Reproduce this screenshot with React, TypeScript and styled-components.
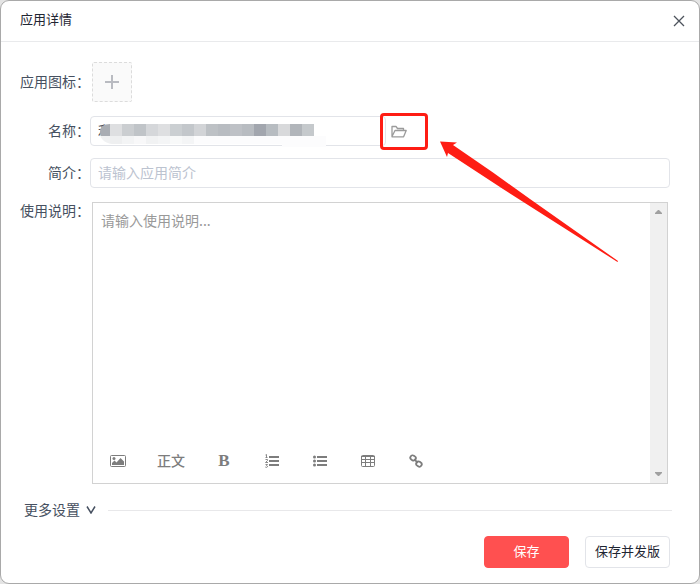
import React from "react";
import styled, { createGlobalStyle } from "styled-components";

const GlobalStyle = createGlobalStyle`
  *, *::before, *::after { box-sizing: border-box; }
  body {
    margin: 0;
    background: #e4e4e4;
    font-family: "Noto Sans CJK SC", sans-serif;
    font-size: 14px;
    line-height: 20px;
    color: #465060;
  }
  button, input, textarea { font: inherit; color: inherit; margin: 0; }
  button { cursor: pointer; }
`;

const Dialog = styled.section`
  display: flex;
  flex-direction: column;
  min-height: 100vh;
  background: #fff;
  border: 1px solid #a9a9a9;
  border-radius: 9px;
`;

const Header = styled.header`
  display: flex;
  align-items: center;
  justify-content: space-between;
  height: 41px;
  padding: 0 12px 0 19px;
  border-bottom: 1px solid #e9eaec;
`;

const Title = styled.h1`
  margin: 0;
  padding-bottom: 4px;
  font-size: 13px;
  font-weight: 400;
  color: #1f2633;
`;

const IconButton = styled.button`
  display: flex;
  align-items: center;
  justify-content: center;
  padding: 0;
  border: 0;
  background: none;
  color: #4d535c;
`;

const Form = styled.form`
  display: flex;
  flex: 1;
  flex-direction: column;
  padding: 20px 29px 15px 19px;
`;

const Row = styled.div<{ $gap?: number; $grow?: boolean }>`
  display: grid;
  grid-template-columns: 70px minmax(0, 1fr);
  align-items: ${(p) => (p.$grow ? "stretch" : "center")};
  flex: ${(p) => (p.$grow ? "1 0 auto" : "none")};
  margin-bottom: ${(p) => p.$gap ?? 12}px;
`;

const Label = styled.label`
  padding-bottom: 2px;
  line-height: 16px;
  text-align: right;
  white-space: nowrap;
`;

const Upload = styled.button`
  display: flex;
  align-items: center;
  justify-content: center;
  width: 40px;
  height: 40px;
  margin-left: 2px;
  padding: 0;
  border: 1px dashed #dcdcdc;
  border-radius: 2px;
  background: #fafafa;
  color: #b9bbc1;
`;

const TextInput = styled.input`
  width: 100%;
  height: 30px;
  padding: 0 7px 2px;
  border: 1px solid #e2e4e9;
  border-radius: 4px;
  outline: none;
  background: #fff;
  &::placeholder { color: #bcc3d0; opacity: 1; }
`;

const NameField = styled.div`
  display: flex;
  align-items: center;
  position: relative;
`;

const NameInput = styled(TextInput)`
  width: 296px;
`;

const BrowseButton = styled(IconButton)`
  width: 26px;
  height: 30px;
  color: #9b9b9b;
`;

const Mosaic = styled.svg`
  position: absolute;
  left: 8px;
  top: 4px;
  pointer-events: none;
`;

const Highlight = styled.div`
  position: absolute;
  left: 290px;
  top: -3px;
  width: 48px;
  height: 37px;
  border: 3px solid #fe1d14;
  border-radius: 4px;
  pointer-events: none;
`;

const Arrow = styled.svg`
  position: absolute;
  left: 348px;
  top: 24px;
  z-index: 1;
  pointer-events: none;
`;

const Editor = styled.div`
  display: flex;
  min-height: 282px;
  margin: 0 2px;
  border: 1px solid #d2d2d2;
`;

const EditorMain = styled.div`
  display: flex;
  flex: 1;
  flex-direction: column;
  min-width: 0;
`;

const EditorText = styled.textarea`
  flex: 1;
  width: 100%;
  padding: 7px 8px;
  border: 0;
  outline: none;
  resize: none;
  overflow: hidden;
  background: none;
  &::placeholder { color: #999; opacity: 1; }
`;

const Toolbar = styled.div`
  display: flex;
  align-items: center;
  height: 44px;
  padding-left: 1px;
`;

const Tool = styled(IconButton)<{ $wide?: boolean }>`
  width: ${(p) => (p.$wide ? 58 : 48)}px;
  height: 30px;
  padding-bottom: ${(p) => (p.$wide ? 2 : 0)}px;
  color: #7d7d7d;
  font-weight: 500;
`;

const BoldGlyph = styled.b`
  font-family: "Liberation Serif", serif;
  font-size: 17px;
`;

const ScrollTrack = styled.div`
  display: flex;
  flex-direction: column;
  justify-content: space-between;
  width: 17px;
  background: #f0f0f0;
`;

const ScrollButton = styled(IconButton)`
  height: 18px;
  color: #a0a0a0;
`;

const More = styled.div`
  display: flex;
  align-items: center;
  gap: 12px;
  padding-left: 4px;
  margin-bottom: 16px;
  &::after {
    content: "";
    flex: 1;
    height: 1px;
    margin-right: -2px;
    background: #e8e8ea;
  }
`;

const MoreButton = styled(IconButton)`
  gap: 6px;
  height: 20px;
  color: #465060;
`;

const MoreText = styled.span`
  padding-bottom: 2px;
`;

const Footer = styled.footer`
  display: flex;
  justify-content: flex-end;
  gap: 16px;
`;

const ActionButton = styled.button<{ $primary?: boolean }>`
  width: 85px;
  height: 32px;
  padding: 0 0 2px;
  border: 1px solid ${(p) => (p.$primary ? "#ff5050" : "#e2e4e9")};
  border-radius: 4px;
  background: ${(p) => (p.$primary ? "#ff5050" : "#fff")};
  color: ${(p) => (p.$primary ? "#fff" : "#1f2633")};
  font-size: 13px;
`;

const CELLS = [
  "#a9adb3", "#dedfe1", "#cbced1", "#c0c4c8", "#d5d7da", "#dedfe1", "#cbcfd2", "#c3c7cb", "#d2d4d7",
  "#bdc1c5", "#b8bcc1", "#bec1c6", "#b8bcc1", "#a2a6ae", "#b7bcc1", "#d8d9db", "#b1b5ba", "#c5c9cc",
];
const FAINT_CELLS = ["#f0f1f2", "#eeeff0", "#f3f4f5", "#f8f8f9", "#f1f2f3", "#f4f5f6", "#f8f9f9", "#f4f5f6"];

function NameMosaic() {
  return (
    <Mosaic width="240" height="28" aria-hidden="true">
      <clipPath id="smudge">
        <path d="M12 4H216V16H228V27H184V24H14Q2 22 2 12Q2 4 12 4Z" />
      </clipPath>
      <g clipPath="url(#smudge)" shapeRendering="crispEdges">
        <rect y="16" width="240" height="12" fill="#fcfcfd" />
        {FAINT_CELLS.map((c, i) => (
          <rect key={i} x={i * 12} y="16" width="12" height="8" fill={c} />
        ))}
        {CELLS.map((c, i) => (
          <rect key={i} x={i * 12} y="4" width="12" height="12" fill={c} />
        ))}
      </g>
    </Mosaic>
  );
}

function ImageIcon() {
  return (
    <svg width="16" height="12" viewBox="0 0 16 12">
      <rect x="0.5" y="0.5" width="15" height="11" rx="1" fill="none" stroke="currentColor" />
      <circle cx="4" cy="3.5" r="1.5" fill="currentColor" />
      <path d="M2 10V8L4.5 5.5L6.5 7.5L10.5 3L14 6.5V10Z" fill="currentColor" />
    </svg>
  );
}

function OrderedIcon() {
  return (
    <svg width="14" height="14" viewBox="0 0 14 14" fill="none" stroke="currentColor">
      <path d="M4 3H14M4 7H14M4 11H14" strokeWidth="2" />
      <path d="M0.5 1L1.5 0.5V3.5M0.5 3.5H2.5M0.5 5.5H2.5V6.5L0.5 8.5H3M0.5 10.5H2.5L1.5 11.5Q3 12 2.3 13Q1.5 14 0.3 13" strokeWidth="0.9" />
    </svg>
  );
}

function BulletIcon() {
  return (
    <svg width="14" height="12" viewBox="0 0 14 12" fill="currentColor">
      <circle cx="1.5" cy="2" r="1.5" />
      <circle cx="1.5" cy="6" r="1.5" />
      <circle cx="1.5" cy="10" r="1.5" />
      <path d="M4 1H14V3H4ZM4 5H14V7H4ZM4 9H14V11H4Z" />
    </svg>
  );
}

function TableIcon() {
  return (
    <svg width="14" height="12" viewBox="0 0 14 12" fill="none" stroke="currentColor">
      <rect x="0.5" y="0.5" width="13" height="11" rx="1" />
      <path d="M0 1.5H14M0 4.5H14M0 7.5H14M4.5 1V12M9.5 1V12" />
    </svg>
  );
}

function LinkIcon() {
  return (
    <svg width="14" height="14" viewBox="0 0 14 14" fill="none" stroke="currentColor" strokeWidth="1.8">
      <rect x="1.2" y="1.6" width="5.6" height="4.6" rx="2.2" transform="rotate(35 4 4)" />
      <rect x="7.2" y="7.8" width="5.6" height="4.6" rx="2.2" transform="rotate(35 10 10)" />
      <path d="M5.2 5.2L8.8 8.8" />
    </svg>
  );
}

function FolderIcon() {
  return (
    <svg width="16" height="13" viewBox="0 0 16 13" fill="none" stroke="currentColor" strokeWidth="1.3" strokeLinejoin="round">
      <path d="M1 11.5V1.5H5L6.5 3.5H12.5V5.5M1 11.5L4 5.5H15.2L12.6 11.8H1Z" />
    </svg>
  );
}

export default function App() {
  return (
    <>
      <GlobalStyle />
      <Dialog role="dialog" aria-labelledby="dialog-title">
        <Header>
          <Title id="dialog-title">应用详情</Title>
          <IconButton type="button" aria-label="关闭">
            <svg width="16" height="16" viewBox="0 0 16 16" fill="none" stroke="currentColor" strokeWidth="1.3">
              <path d="M3 3L13 13M13 3L3 13" />
            </svg>
          </IconButton>
        </Header>
        <Form onSubmit={(e) => e.preventDefault()}>
          <Row $gap={14}>
            <Label htmlFor="app-icon">应用图标：</Label>
            <Upload id="app-icon" type="button">
              <svg width="16" height="16" viewBox="0 0 16 16" stroke="currentColor" strokeWidth="2">
                <path d="M8 1V15M1 8H15" />
              </svg>
            </Upload>
          </Row>
          <Row>
            <Label htmlFor="app-name">名称：</Label>
            <NameField>
              <NameInput id="app-name" defaultValue="利" />
              <BrowseButton type="button" aria-label="选择">
                <FolderIcon />
              </BrowseButton>
              <NameMosaic />
              <Highlight />
              <Arrow width="184" height="124" viewBox="0 0 184 124" fill="#fe1d14" aria-hidden="true">
                <path d="M2 1.5L19 2.5L15 5L55 32.5L92 59L180 121L179.5 122L65 49L10 13L9 17Z" />
              </Arrow>
            </NameField>
          </Row>
          <Row $gap={14}>
            <Label htmlFor="app-intro">简介：</Label>
            <TextInput id="app-intro" placeholder="请输入应用简介" />
          </Row>
          <Row $gap={16} $grow>
            <Label htmlFor="app-usage">使用说明：</Label>
            <Editor>
              <EditorMain>
                <EditorText id="app-usage" placeholder="请输入使用说明..." />
                <Toolbar>
                  <Tool type="button" aria-label="图片"><ImageIcon /></Tool>
                  <Tool type="button" $wide>正文</Tool>
                  <Tool type="button"><BoldGlyph>B</BoldGlyph></Tool>
                  <Tool type="button" aria-label="有序列表"><OrderedIcon /></Tool>
                  <Tool type="button" aria-label="无序列表"><BulletIcon /></Tool>
                  <Tool type="button" aria-label="表格"><TableIcon /></Tool>
                  <Tool type="button" aria-label="链接"><LinkIcon /></Tool>
                </Toolbar>
              </EditorMain>
              <ScrollTrack>
                <ScrollButton type="button" aria-label="向上滚动">
                  <svg width="7" height="4" fill="currentColor"><path d="M0 4V3L3 0H4L7 3V4Z" /></svg>
                </ScrollButton>
                <ScrollButton type="button" aria-label="向下滚动">
                  <svg width="7" height="4" fill="currentColor"><path d="M0 0V1L3 4H4L7 1V0Z" /></svg>
                </ScrollButton>
              </ScrollTrack>
            </Editor>
          </Row>
          <More>
            <MoreButton type="button">
              <MoreText>更多设置</MoreText>
              <svg width="10" height="8" viewBox="0 0 10 8" fill="none" stroke="currentColor" strokeWidth="1.5">
                <path d="M1 0.5L5 7L9 0.5" />
              </svg>
            </MoreButton>
          </More>
          <Footer>
            <ActionButton type="submit" $primary>保存</ActionButton>
            <ActionButton type="button">保存并发版</ActionButton>
          </Footer>
        </Form>
      </Dialog>
    </>
  );
}
